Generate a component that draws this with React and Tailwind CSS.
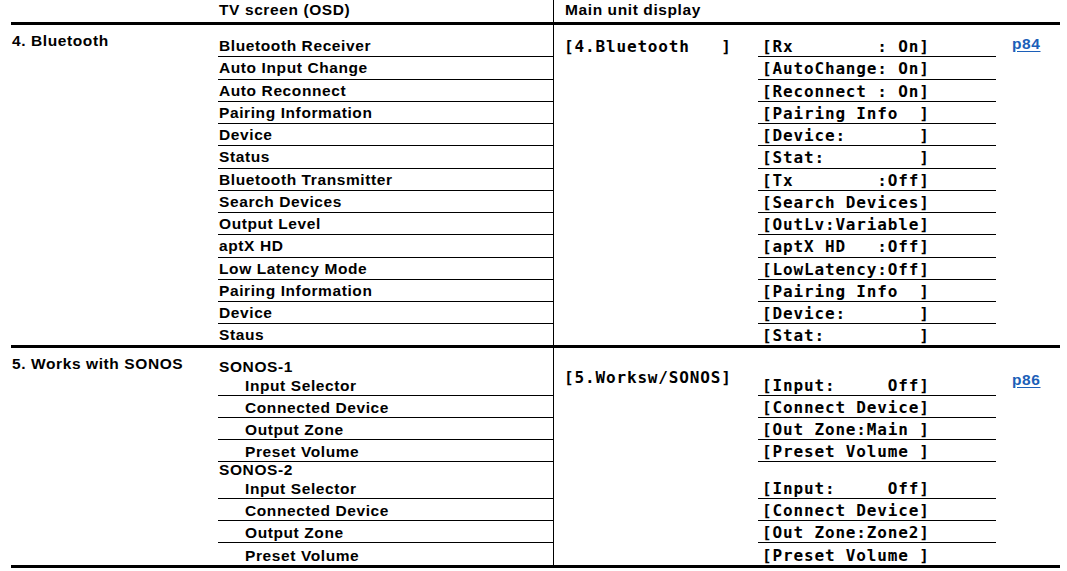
import React from "react";

const sansBase = "font-['Liberation_Sans',Arial,sans-serif] font-bold text-[15.5px] tracking-[0.6px]";
const sans = `${sansBase} text-black`;
const mono = "font-['DejaVu_Sans_Mono',monospace] font-bold text-[16px] tracking-[0.85px] text-black whitespace-pre";

const bluetoothRows = [
  ["Bluetooth Receiver", "[Rx        : On]"],
  ["Auto Input Change", "[AutoChange: On]"],
  ["Auto Reconnect", "[Reconnect : On]"],
  ["Pairing Information", "[Pairing Info  ]"],
  ["Device", "[Device:       ]"],
  ["Status", "[Stat:         ]"],
  ["Bluetooth Transmitter", "[Tx        :Off]"],
  ["Search Devices", "[Search Devices]"],
  ["Output Level", "[OutLv:Variable]"],
  ["aptX HD", "[aptX HD   :Off]"],
  ["Low Latency Mode", "[LowLatency:Off]"],
  ["Pairing Information", "[Pairing Info  ]"],
  ["Device", "[Device:       ]"],
  ["Staus", "[Stat:         ]"],
];

// each sonos line: label, display text, row height, header?, bottom rule?
const sonosRows = [
  { tv: "SONOS-1", h: "h-[18px]", head: true },
  { tv: "Input Selector", unit: "[Input:     Off]", h: "h-[20px]", line: true },
  { tv: "Connected Device", unit: "[Connect Device]", h: "h-[22px]", line: true },
  { tv: "Output Zone", unit: "[Out Zone:Main ]", h: "h-[22px]", line: true },
  { tv: "Preset Volume", unit: "[Preset Volume ]", h: "h-[22px]", line: true },
  { tv: "SONOS-2", h: "h-[17px]", head: true },
  { tv: "Input Selector", unit: "[Input:     Off]", h: "h-[20px]", line: true },
  { tv: "Connected Device", unit: "[Connect Device]", h: "h-[22px]", line: true },
  { tv: "Output Zone", unit: "[Out Zone:Zone2]", h: "h-[22px]", line: true },
  { tv: "Preset Volume", unit: "[Preset Volume ]", h: "h-[21.75px]" },
];

const PageLink = ({ children, pt }) => (
  <div className={`w-[64px] pl-[16px] ${pt}`}>
    <a href="#" className={`${sansBase} leading-[22px] text-[#1c5fb8] underline underline-offset-2`}>
      {children}
    </a>
  </div>
);

const Rule = () => <div className="h-[3px] bg-black" />;

export default function App() {
  return (
    <div className="bg-white w-[1067px] h-[571px] overflow-hidden">
      <div className="ml-[11px] w-[1049px]">
        {/* header */}
        <div className="flex h-[22px]">
          <div className="w-[207px]" />
          <div className={`w-[336px] border-r border-black pl-[1px] ${sans} leading-[20px]`}>TV screen (OSD)</div>
          <div className={`pl-[11px] ${sans} leading-[20px]`}>Main unit display</div>
        </div>
        <Rule />

        {/* 4. Bluetooth */}
        <div className="flex">
          <div className={`w-[207px] pt-[5px] pl-[1px] ${sans} leading-[22px]`}>4. Bluetooth</div>
          <div className="w-[336px] border-r border-black pt-[10px]">
            {bluetoothRows.map(([tv], i) => (
              <div
                key={i}
                className={`pl-[1px] ${sans} leading-[22px] ${i < bluetoothRows.length - 1 ? "h-[22.25px] border-b border-black" : "h-[21px]"}`}
              >
                {tv}
              </div>
            ))}
          </div>
          <div className="w-[204px] pt-[10px] pl-[10px]">
            <div className={`${mono} leading-[24px]`}>[4.Bluetooth   ]</div>
          </div>
          <div className="w-[238px] pt-[10px]">
            {bluetoothRows.map(([, unit], i) => (
              <div
                key={i}
                className={`pl-[4px] ${mono} leading-[24px] ${i < bluetoothRows.length - 1 ? "h-[22.25px] border-b border-black" : "h-[21px]"}`}
              >
                {unit}
              </div>
            ))}
          </div>
          <PageLink pt="pt-[6px]">p84</PageLink>
        </div>
        <Rule />

        {/* 5. Works with SONOS */}
        <div className="flex">
          <div className={`w-[207px] pt-[5px] pl-[1px] ${sans} leading-[22px]`}>5. Works with SONOS</div>
          <div className="w-[336px] border-r border-black pt-[10px]">
            {sonosRows.map((r, i) => (
              <div
                key={i}
                className={`flex items-end ${r.h} ${r.line ? "border-b border-black" : ""} ${r.head ? "pl-[1px]" : "pl-[27px]"}`}
              >
                <span className={`${sans} leading-[18px]`}>{r.tv}</span>
              </div>
            ))}
          </div>
          <div className="w-[204px] pt-[18px] pl-[10px]">
            <div className={`${mono} leading-[24px]`}>[5.Worksw/SONOS]</div>
          </div>
          <div className="w-[238px] pt-[10px]">
            {sonosRows.map((r, i) => (
              <div key={i} className={`flex items-end pl-[4px] ${r.h} ${r.line ? "border-b border-black" : ""}`}>
                {r.unit && <span className={`${mono} leading-[18px]`}>{r.unit}</span>}
              </div>
            ))}
          </div>
          <PageLink pt="pt-[19px]">p86</PageLink>
        </div>
        <Rule />
      </div>
    </div>
  );
}
